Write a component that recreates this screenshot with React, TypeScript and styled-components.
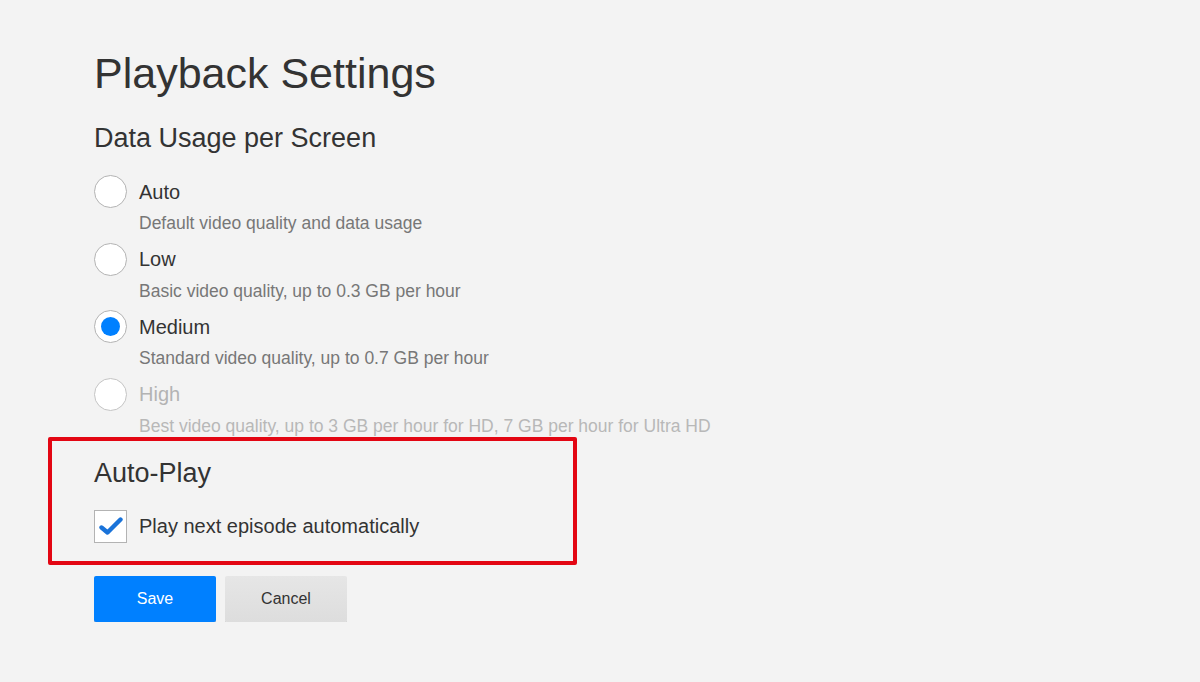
import React, { useState } from 'react';
import styled, { createGlobalStyle } from 'styled-components';

const GlobalStyle = createGlobalStyle`
  html, body {
    margin: 0;
    padding: 0;
    background: #f3f3f3;
  }

  body {
    font-family: 'Liberation Sans', Arial, sans-serif;
    color: #333;
  }
`;

type Quality = 'auto' | 'low' | 'medium' | 'high';

const options: {
  id: Quality;
  label: string;
  description: string;
  disabled?: boolean;
}[] = [
  { id: 'auto', label: 'Auto', description: 'Default video quality and data usage' },
  { id: 'low', label: 'Low', description: 'Basic video quality, up to 0.3 GB per hour' },
  {
    id: 'medium',
    label: 'Medium',
    description: 'Standard video quality, up to 0.7 GB per hour',
  },
  {
    id: 'high',
    label: 'High',
    description:
      'Best video quality, up to 3 GB per hour for HD, 7 GB per hour for Ultra HD',
    disabled: true,
  },
];

export default function App() {
  const [quality, setQuality] = useState<Quality>('medium');
  const [autoPlay, setAutoPlay] = useState(true);

  return (
    <>
      <GlobalStyle />
      <Page>
        <Title>Playback Settings</Title>

        <SectionTitle>Data Usage per Screen</SectionTitle>
        <OptionList>
          {options.map((option) => (
            <Option key={option.id}>
              <OptionRow
                $disabled={option.disabled}
                onClick={() => !option.disabled && setQuality(option.id)}
              >
                <Radio $disabled={option.disabled}>
                  {quality === option.id && <RadioDot />}
                </Radio>
                <OptionLabel $disabled={option.disabled}>{option.label}</OptionLabel>
              </OptionRow>
              <OptionDescription $disabled={option.disabled}>
                {option.description}
              </OptionDescription>
            </Option>
          ))}
        </OptionList>

        <HighlightBox>
          <SectionTitle>Auto-Play</SectionTitle>
          <CheckRow onClick={() => setAutoPlay(!autoPlay)}>
            <Checkbox>
              {autoPlay && (
                <svg width="24" height="20" viewBox="0 0 24 20">
                  <path
                    d="M2.5 11.5 L8.5 16.5 L21.5 3.5"
                    fill="none"
                    stroke="#1a73d9"
                    strokeWidth="4.4"
                    strokeLinecap="round"
                    strokeLinejoin="round"
                  />
                </svg>
              )}
            </Checkbox>
            <OptionLabel>Play next episode automatically</OptionLabel>
          </CheckRow>
        </HighlightBox>

        <Actions>
          <Button $primary>Save</Button>
          <Button>Cancel</Button>
        </Actions>
      </Page>
    </>
  );
}

const Page = styled.div`
  padding: 48px 0 0 94px;
  display: flex;
  flex-direction: column;
  align-items: flex-start;
`;

const Title = styled.h1`
  margin: 0 0 24px;
  font-size: 43px;
  line-height: 50px;
  font-weight: 400;
  color: #333;
`;

const SectionTitle = styled.h2`
  margin: 0 0 21px;
  font-size: 27px;
  line-height: 32px;
  font-weight: 400;
  color: #333;
`;

const OptionList = styled.div`
  display: flex;
  flex-direction: column;
  gap: 8.5px;
`;

const Option = styled.div`
  display: flex;
  flex-direction: column;
  gap: 4px;
`;

const OptionRow = styled.div<{ $disabled?: boolean }>`
  display: flex;
  align-items: center;
  gap: 12px;
  height: 33px;
  cursor: ${(p) => (p.$disabled ? 'default' : 'pointer')};
`;

const Radio = styled.span<{ $disabled?: boolean }>`
  box-sizing: border-box;
  width: 33px;
  height: 33px;
  border-radius: 50%;
  background: #fff;
  border: 1px solid ${(p) => (p.$disabled ? '#c4c4c4' : '#b3b3b3')};
  display: flex;
  align-items: center;
  justify-content: center;
  flex-shrink: 0;
`;

const RadioDot = styled.span`
  width: 19px;
  height: 19px;
  border-radius: 50%;
  background: #0080ff;
`;

const OptionLabel = styled.span<{ $disabled?: boolean }>`
  font-size: 20px;
  line-height: 24px;
  color: ${(p) => (p.$disabled ? '#b3b3b3' : '#333')};
`;

const OptionDescription = styled.div<{ $disabled?: boolean }>`
  padding-left: 45px;
  font-size: 17.5px;
  line-height: 22px;
  color: ${(p) => (p.$disabled ? '#b8b8b8' : '#777')};
`;

const HighlightBox = styled.section`
  box-sizing: border-box;
  width: 529px;
  margin: 0 0 11px -46px;
  padding: 16px 0 18px 42px;
  border: 4px solid #e30613;
  border-radius: 2px;
  display: flex;
  flex-direction: column;
  align-items: flex-start;
`;

const CheckRow = styled.div`
  display: flex;
  align-items: center;
  gap: 12px;
  cursor: pointer;
`;

const Checkbox = styled.span`
  box-sizing: border-box;
  width: 33px;
  height: 33px;
  background: #fff;
  border: 1px solid #b3b3b3;
  display: flex;
  align-items: center;
  justify-content: center;
  flex-shrink: 0;
`;

const Actions = styled.div`
  display: flex;
  gap: 9px;
`;

const Button = styled.button<{ $primary?: boolean }>`
  width: 122px;
  height: 46px;
  border: none;
  border-radius: 2px;
  font-family: 'Liberation Sans', Arial, sans-serif;
  font-size: 16px;
  cursor: pointer;
  color: ${(p) => (p.$primary ? '#fff' : '#333')};
  background: ${(p) =>
    p.$primary ? '#0080ff' : 'linear-gradient(180deg, #e6e6e6 0%, #dddddd 100%)'};
  box-shadow: 0 1px 0 rgba(0, 0, 0, 0.2);
`;
